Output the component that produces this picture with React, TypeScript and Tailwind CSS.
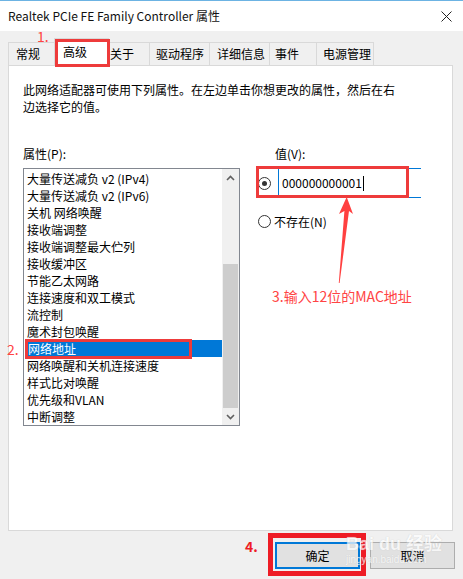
import React from "react";

const tabs = [
  { label: "常规", w: "w-[47px]", pl: "pl-[7px]" },
  { label: "高级", w: "w-[55px]", pl: "pl-[8px]", active: true },
  { label: "关于", w: "w-[42px]", pl: "pl-[1px]" },
  { label: "驱动程序", w: "w-[61px]", pl: "pl-[6px]" },
  { label: "详细信息", w: "w-[61px]", pl: "pl-[7px]" },
  { label: "事件", w: "w-[48px]", pl: "pl-[5px]" },
  { label: "电源管理", w: "w-[58px]", pl: "pl-[6px]" },
];

const props = [
  "大量传送减负 v2 (IPv4)",
  "大量传送减负 v2 (IPv6)",
  "关机 网络唤醒",
  "接收端调整",
  "接收端调整最大伫列",
  "接收缓冲区",
  "节能乙太网路",
  "连接速度和双工模式",
  "流控制",
  "魔术封包唤醒",
  "网络地址",
  "网络唤醒和关机连接速度",
  "样式比对唤醒",
  "优先级和VLAN",
  "中断调整",
];

function Radio({ checked }: { checked?: boolean }) {
  return (
    <div className="w-[13px] h-[13px] shrink-0 rounded-full border border-[#333] bg-white flex items-center justify-center">
      {checked && <div className="w-[5px] h-[5px] rounded-full bg-[#333]" />}
    </div>
  );
}

export default function App() {
  return (
    <div className="relative w-[463px] h-[579px] bg-[#f0f0f0] flex flex-col text-[12px] text-black font-['Noto_Sans_CJK_SC',sans-serif] overflow-hidden">
      {/* Title bar */}
      <div className="h-[31px] shrink-0 bg-white border-t border-[#6cb3e3] flex items-center justify-between pl-2 pr-[11px]">
        <span className="leading-[16px] text-[#111]">Realtek PCIe FE Family Controller 属性</span>
        <svg width="11" height="11" viewBox="0 0 11 11">
          <path d="M0.5 0.5 L10.5 10.5 M10.5 0.5 L0.5 10.5" stroke="#222" strokeWidth="1" />
        </svg>
      </div>

      {/* Tabs */}
      <div className="relative h-[34px] shrink-0 flex items-end pl-2">
        <span className="absolute left-[37px] top-[-2px] text-[14px] leading-[14px] text-[#ff4444]">1.</span>
        {tabs.map((t, i) =>
          t.active ? (
            <div
              key={t.label}
              className={`relative z-10 -mb-px h-[28px] bg-white border border-b-0 border-[#d9d9d9] ${t.w} ${t.pl} pt-[5px] leading-[16px] -ml-px`}
            >
              {t.label}
              <div className="absolute left-0 top-0 w-[55px] h-[28px] border-[3px] border-[#ee3b3b]" />
            </div>
          ) : (
            <div
              key={t.label}
              className={`h-[23px] bg-[#f0f0f0] border border-b-0 border-[#d9d9d9] ${t.w} ${t.pl} pt-[3px] leading-[16px] ${i > 0 ? "-ml-px" : ""}`}
            >
              {t.label}
            </div>
          )
        )}
      </div>

      {/* Panel */}
      <div className="relative ml-2 w-[445px] h-[466px] shrink-0 bg-white border border-[#d9d9d9] pl-[14px] pt-[15px]">
        <p className="leading-[17px]">
          此网络适配器可使用下列属性。在左边单击你想更改的属性，然后在右
          <br />
          边选择它的值。
        </p>

        <div className="mt-[30px] flex">
          {/* Left: property list */}
          <div className="w-[217px] shrink-0">
            <div className="h-[17px] leading-[17px]">属性(P):</div>
            <div className="relative mt-[6px] h-[258px] border border-[#828790] flex">
              <div className="flex-1 pl-[2px] pt-px">
                {props.map((p) =>
                  p === "网络地址" ? (
                    <div key={p} className="relative h-[17px] leading-[17px] bg-[#0078d7] text-white pl-[2px]">
                      {p}
                      <div className="absolute left-[-1px] top-[-1px] w-[167px] h-[20px] border-[3px] border-[#ee3b3b]" />
                      <span className="absolute left-[-19px] top-[1px] text-[14px] leading-[16px] text-[#ff4444]">2.</span>
                    </div>
                  ) : (
                    <div key={p} className="h-[17px] leading-[17px] pl-[1px]">
                      {p}
                    </div>
                  )
                )}
              </div>
              <div className="w-[17px] bg-[#f0f0f0] flex flex-col">
                <div className="h-[17px] flex items-center justify-center">
                  <svg width="9" height="6" viewBox="0 0 9 6">
                    <path d="M1 5 L4.5 1.5 L8 5" stroke="#606060" strokeWidth="1.6" fill="none" />
                  </svg>
                </div>
                <div className="flex-1 pt-[78px] px-px flex flex-col">
                  <div className="flex-1 bg-[#cdcdcd]" />
                </div>
                <div className="h-[17px] flex items-center justify-center">
                  <svg width="9" height="6" viewBox="0 0 9 6">
                    <path d="M1 1 L4.5 4.5 L8 1" stroke="#606060" strokeWidth="1.6" fill="none" />
                  </svg>
                </div>
              </div>
            </div>
          </div>

          {/* Right: value */}
          <div className="relative ml-[18px] flex-1">
            <div className="h-[17px] leading-[17px] pl-[17px]">值(V):</div>
            <div className="relative mt-[6px] h-[30px] flex items-center">
              <Radio checked />
              <div className="ml-[7px] h-[30px] w-[143px] border-l border-t border-b border-[#0078d7] pl-[3px] flex items-center leading-[16px]">
                000000000001
                <span className="ml-px inline-block w-px h-[15px] bg-black" />
              </div>
              <div className="absolute left-[-2px] top-[-2px] w-[153px] h-[32px] border-[3px] border-[#ee3b3b]" />
            </div>
            <div className="mt-[15px] h-[17px] flex items-center">
              <Radio />
              <span className="ml-[3px] leading-[17px]">不存在(N)</span>
            </div>
            <div className="mt-[57px] pl-[14px] text-[14px] leading-[18px] text-[#ff4444]">3.输入12位的MAC地址</div>
            <svg
              className="absolute left-[79px] top-[52px]"
              width="18"
              height="88"
              viewBox="0 0 18 88"
            >
              <path d="M9.7 0 L16 17 L12 14 L2.6 86 L1.8 86 L7.4 14 L2 17 Z" fill="#ff4040" />
            </svg>
          </div>
        </div>
      </div>

      {/* Buttons */}
      <div className="mt-[11px] flex justify-end gap-[10px] pr-[8px]">
        <div className="relative">
          <span className="absolute left-[-30px] top-[-4px] text-[14px] leading-[16px] font-bold text-[#ee1c25]">4.</span>
          <div className="w-[85px] h-[27px] bg-[#e1e1e1] border-2 border-[#0078d7] flex items-center justify-center leading-[16px]">
            确定
          </div>
          <div className="absolute left-[-7px] top-[-9px] w-[98px] h-[43px] border-[5px] border-[#ee1c25]" />
        </div>
        <div className="w-[85px] h-[27px] bg-[#e1e1e1] border border-[#adadad] flex items-center justify-center leading-[16px]">
          取消
        </div>
      </div>

      {/* faint watermark */}
      <div className="pointer-events-none absolute left-[346px] top-[534px] flex flex-col items-start text-white opacity-70 [text-shadow:0_0_1px_#bbb]">
        <span className="text-[18px] leading-[20px] font-bold font-['Liberation_Sans','Noto_Sans_CJK_SC',sans-serif]">Bai du 经验</span>
        <span className="text-[10px] leading-[12px] font-['Liberation_Sans',sans-serif]">jingyan.baidu.com</span>
      </div>
    </div>
  );
}
